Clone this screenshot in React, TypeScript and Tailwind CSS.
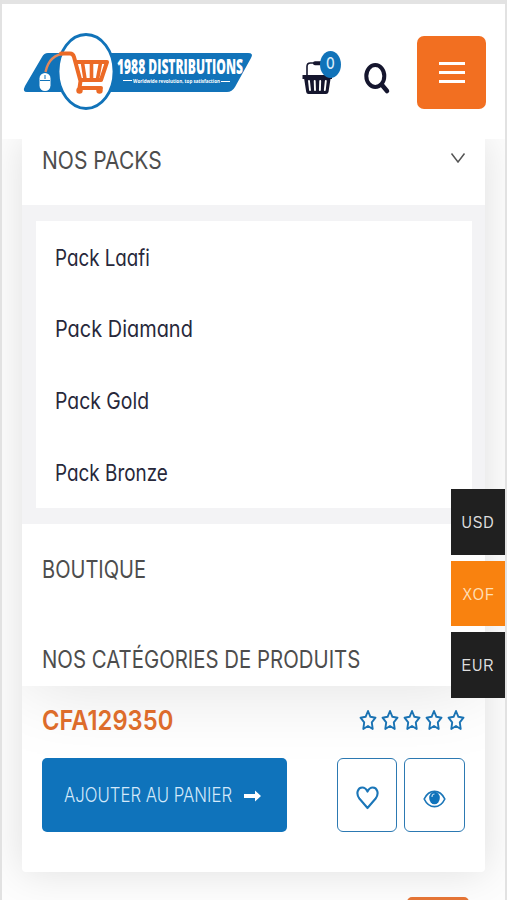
import React from 'react';
import clsx from 'clsx';

const packs = [
  { label: 'Pack Laafi', scale: 'scale-x-[0.835]' },
  { label: 'Pack Diamand', scale: 'scale-x-[0.886]' },
  { label: 'Pack Gold', scale: 'scale-x-[0.862]' },
  { label: 'Pack Bronze', scale: 'scale-x-[0.84]' },
];

const currencies = [
  { code: 'USD', active: false },
  { code: 'XOF', active: true },
  { code: 'EUR', active: false },
];

function Logo() {
  return (
    <svg className="h-[80px] w-[232px]" viewBox="22 31 232 80" role="img" aria-label="1988 Distributions">
      <path d="M48 53H248Q254 53 251 58L235 87Q232 92 227 92H27Q22 92 25 86L42 57Q44 53 48 53Z" fill="#1173b9" />
      <ellipse cx="86" cy="71.500" rx="28" ry="37" fill="#fff" stroke="#1173b9" strokeWidth="2.800" />
      {/* mouse */}
      <rect x="39.500" y="73" width="11" height="18" rx="5.500" fill="#fff" />
      <path d="M40 80.500H50M45 75V79" stroke="#1173b9" strokeWidth="1" fill="none" />
      <path d="M45.500 72C48 60 55 54 66 53.500" fill="none" stroke="#e5875a" strokeWidth="2.400" />
      {/* cart */}
      <g fill="none" stroke="#ec6a26" strokeLinecap="round" strokeLinejoin="round">
        <path d="M61 53.500H70Q73 53.500 74 57L80.500 81L79.500 88H101" strokeWidth="4" />
        <path d="M76 62H107L101 80H81" strokeWidth="4" />
        <path d="M82.500 63L85 79M91.500 63V79M100.500 63L97.500 79" strokeWidth="3.600" />
      </g>
      <circle cx="79.500" cy="90.500" r="3.200" fill="#ec6a26" />
      <circle cx="99.500" cy="90.500" r="3.200" fill="#ec6a26" />
      <g transform="translate(117 73.500) scale(0.588 1)">
        <text fill="#fff" fontFamily="Open Sans, sans-serif" fontWeight="800" fontSize="20.500">
          1988 DISTRIBUTIONS
        </text>
      </g>
      <path d="M123 80.500H132M221 81.500H230" stroke="#fff" strokeWidth="1.200" />
      <text x="133" y="83" textLength="87" lengthAdjust="spacingAndGlyphs" fill="#fff" fontFamily="Open Sans, sans-serif" fontWeight="700" fontSize="6">
        Worldwide revolution, top satisfaction
      </text>
    </svg>
  );
}

function CartButton() {
  return (
    <button className="relative h-[48px] w-[41px]" aria-label="Panier">
      <svg className="h-full w-full" viewBox="301 49 41 48">
        <path d="M307 75V66.500Q307 63 310.500 63H321" fill="none" stroke="#15162e" strokeWidth="1.600" />
        <path d="M315 63.200H321" stroke="#15162e" strokeWidth="4" strokeLinecap="round" />
        <path d="M302.500 75H332V79H330.500L328.500 92Q328 94 326 94H308.500Q306.500 94 306.200 92L304.200 79H302.500Z" fill="#15162e" />
        <path d="M309 81L310 90M314.700 81L315 90M320.200 81L319.900 90M325.800 81L324.800 90" stroke="#fff" strokeWidth="1.900" strokeLinecap="round" />
      </svg>
      <span className="absolute right-[1px] top-[2px] flex h-[27px] w-[21px] items-center justify-center rounded-[50%] bg-[#1173b9] text-[16.500px] font-medium text-[#d9ecfa]">
        <span className="-mt-[2px] scale-x-[0.82]">0</span>
      </span>
    </button>
  );
}

function Header() {
  return (
    <header className="relative z-10 flex h-[139px] border-t-[4px] border-[#e3e3e3] bg-white pl-[20px]">
      <div className="mt-[27px]">
        <Logo />
      </div>
      <div className="ml-[47px] mt-[45px]">
        <CartButton />
      </div>
      <button className="ml-[20px] mt-[57px] h-[34px] w-[30px]" aria-label="Rechercher">
        <svg viewBox="362 61 30 34" className="h-full w-full" fill="none" stroke="#15162e">
          <ellipse cx="375.300" cy="76" rx="9" ry="11" strokeWidth="4" />
          <path d="M382 85L387 91" strokeWidth="4.500" strokeLinecap="round" />
        </svg>
      </button>
      <button
        className="ml-[25px] mt-[32px] flex h-[73px] w-[69px] flex-col items-center justify-center gap-[6px] rounded-[7px] bg-[#f26f21]"
        aria-label="Menu"
      >
        <span className="h-[3px] w-[26px] bg-white" />
        <span className="h-[3px] w-[26px] bg-white" />
        <span className="h-[3px] w-[26px] bg-white" />
      </button>
    </header>
  );
}

function MenuLabel({ children, scale }: { children: React.ReactNode; scale: string }) {
  return (
    <span className={clsx('inline-block origin-left whitespace-nowrap text-[24px] leading-[30px] text-[#4d4d4d]', scale)}>
      {children}
    </span>
  );
}

function Menu() {
  return (
    <nav className="relative h-[547px] bg-white shadow-[0_0_75px_rgba(0,0,0,0.13)]">
      <div className="flex h-[66px] justify-between pl-[20px] pr-[19px] pt-[7px]">
        <MenuLabel scale="scale-x-[0.875]">NOS PACKS</MenuLabel>
        <svg className="mt-[6px] h-[12px] w-[16px]" viewBox="0 0 16 12" fill="none" stroke="#555" strokeWidth="1.500">
          <path d="M1.500 1.500L8 10L14.500 1.500" />
        </svg>
      </div>
      <div className="bg-[#f3f3f5] py-[16px] pl-[14px] pr-[13px]">
        <ul className="bg-white">
          {packs.map((pack) => (
            <li key={pack.label} className="flex h-[71.800px] items-center pl-[19px] pt-[1px]">
              <span className={clsx('inline-block origin-left whitespace-nowrap text-[22.500px] text-[#27283a]', pack.scale)}>
                {pack.label}
              </span>
            </li>
          ))}
        </ul>
      </div>
      <div className="flex h-[90px] items-center pl-[20px] pt-[2px]">
        <MenuLabel scale="scale-x-[0.836]">BOUTIQUE</MenuLabel>
      </div>
      <div className="flex h-[90px] items-center pl-[20px] pt-[2px]">
        <MenuLabel scale="scale-x-[0.849]">NOS CATÉGORIES DE PRODUITS</MenuLabel>
      </div>
    </nav>
  );
}

function Star() {
  return (
    <svg className="h-[22px] w-[18px]" viewBox="0 0 18 22" fill="none" stroke="#1b76b8" strokeWidth="1.900" strokeLinejoin="round">
      <path d="M9 2L11.400 7.800L16.500 8.700L12.800 13.300L13.700 20L9 17L4.300 20L5.200 13.300L1.500 8.700L6.600 7.800Z" />
    </svg>
  );
}

function Product() {
  return (
    <div className="h-[186px] px-[20px]">
      <div className="flex h-[72px] justify-between">
        <span className="mt-[17px] inline-block origin-left scale-x-[0.88] text-[27px] font-semibold leading-[36px] text-[#dd6c2b]">
          CFA129350
        </span>
        <div className="mt-[23px] flex gap-[4px]">
          {[1, 2, 3, 4, 5].map((n) => (
            <Star key={n} />
          ))}
        </div>
      </div>
      <div className="flex">
        <button className="flex h-[74px] w-[245px] items-center rounded-[5px] bg-[#0f73bb] pl-[22px]">
          <span className="flex w-[168px]">
            <span className="inline-block origin-left scale-x-[0.817] whitespace-nowrap pt-px text-[20.500px] font-light text-[#d3e9fa]">
              AJOUTER AU PANIER
            </span>
          </span>
          <svg className="ml-[11px] mt-px h-[12px] w-[19px]" viewBox="0 0 19 12" fill="#fff">
            <path d="M1 4H12V0.500L18 6L12 11.500V8H1Z" />
          </svg>
        </button>
        <button
          className="ml-auto flex h-[74px] w-[60px] items-center justify-center rounded-[6px] border border-[#2c79b2] bg-white"
          aria-label="Favoris"
        >
          <svg className="mt-[5px] h-[24px] w-[23px]" viewBox="0 0 24 24" preserveAspectRatio="none" fill="none" stroke="#1b76b8" strokeWidth="2.200" strokeLinejoin="round">
            <path d="M12 22L3.500 12.500C-0.500 7.500 2 1.500 6.500 1.500C9.500 1.500 11 3.500 12 5.500C13 3.500 14.500 1.500 17.500 1.500C22 1.500 24.500 7.500 20.500 12.500Z" />
          </svg>
        </button>
        <button
          className="ml-[7px] flex h-[74px] w-[61px] items-center justify-center rounded-[6px] border border-[#2c79b2] bg-white"
          aria-label="Aperçu"
        >
          <svg className="mt-[8px] h-[18px] w-[23px]" viewBox="0 0 23 18">
            <path d="M1.200 9C6 -1.200 17 -1.200 21.800 9C17 19.200 6 19.200 1.200 9Z" fill="#fff" stroke="#1b76b8" strokeWidth="1.700" />
            <ellipse cx="11.500" cy="8" rx="5.300" ry="6.300" fill="#0f73bb" />
            <path d="M9 7C9 5 10 4 11.500 4" fill="none" stroke="#b8d8ee" strokeWidth="1.200" />
          </svg>
        </button>
      </div>
    </div>
  );
}

function CurrencySwitcher() {
  return (
    <div className="absolute right-0 top-[489px] z-20 flex flex-col gap-[6px]">
      {currencies.map((currency) => (
        <button
          key={currency.code}
          className={clsx(
            'flex h-[65.500px] w-[54px] items-center justify-center pt-[2px] font-["Liberation_Sans",sans-serif] text-[16.500px] tracking-[1px]',
            currency.active ? 'bg-[#f9820f] text-[#ffdfb5]' : 'bg-[#202020] text-[#dedede]',
          )}
        >
          <span className="inline-block scale-x-[0.87]">{currency.code}</span>
        </button>
      ))}
    </div>
  );
}

export default function App() {
  return (
    <div className="relative h-[900px] w-[507px] overflow-hidden border-x-2 border-[#e2e2e2] bg-[#fdfdfd] font-['Inter',sans-serif] [font-feature-settings:'cv11']">
      <Header />
      <main className="px-[20px]">
        <section className="overflow-clip rounded-b-[4px] bg-white shadow-[0_0_40px_rgba(0,0,0,0.12)]">
          <Menu />
          <Product />
        </section>
        <div className="ml-[385px] mt-[25px] h-[60px] w-[62px] rounded-[5px] bg-[#e47435]" />
      </main>
      <CurrencySwitcher />
    </div>
  );
}
